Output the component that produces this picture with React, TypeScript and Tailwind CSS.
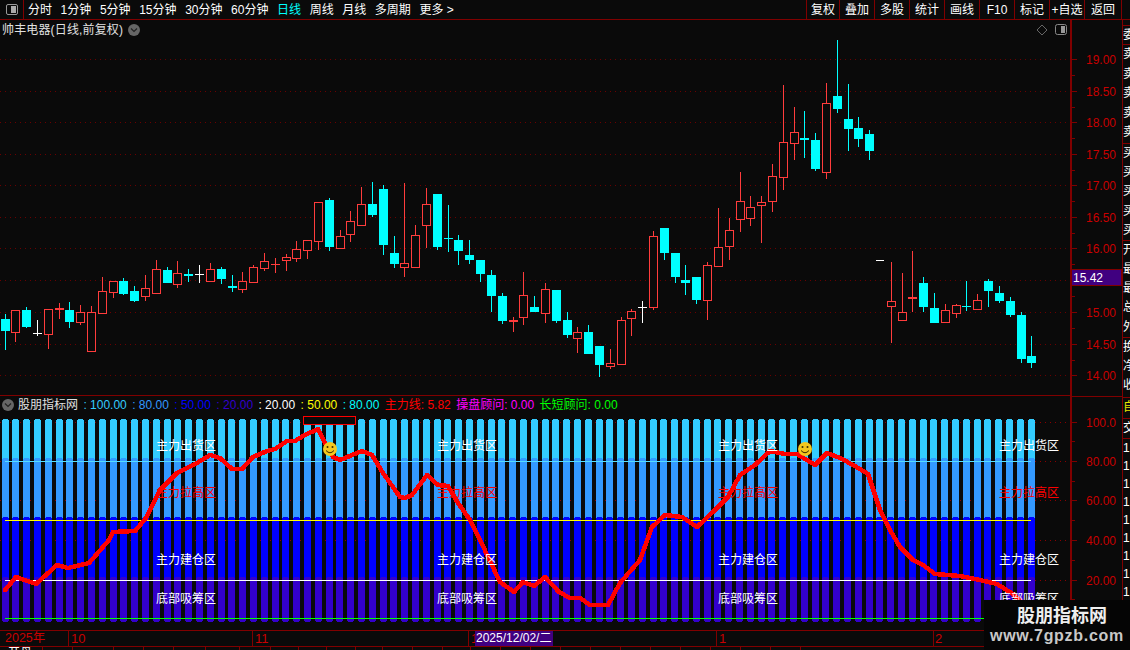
import React from 'react'

type Candle = [number, number, number, number, number, string]

// c = cyan body, r = hollow red, R = solid red, w = white cross
// values are [x, high, top, bottom, low, kind], read off 3x crops
const seg1: Candle[] = [
  [16, 432, 447, 483, 540, 'c'], [46, 421, 421, 485, 516, 'r'], [79, 411, 420, 471, 474, 'c'],
  [112, 450, 490, 492, 498, 'w'], [145, 418, 418, 491, 537, 'r'], [178, 399, 414, 419, 447, 'R'],
  [208, 396, 420, 456, 474, 'c'], [241, 405, 427, 455, 465, 'r'], [274, 408, 427, 542, 542, 'r'],
  [307, 321, 364, 428, 428, 'r'], [340, 334, 334, 365, 384, 'r'], [370, 324, 333, 372, 375, 'c'],
  [403, 348, 363, 393, 396, 'c'], [436, 315, 355, 377, 393, 'r'], [469, 270, 298, 368, 368, 'r'],
  [502, 291, 300, 339, 339, 'c'], [532, 273, 310, 341, 354, 'r'], [565, 297, 312, 318, 336, 'c'],
  [598, 285, 312, 314, 339, 'w'], [631, 279, 298, 332, 332, 'r'], [664, 291, 297, 327, 342, 'c'],
  [697, 315, 348, 354, 366, 'c'], [727, 306, 334, 356, 369, 'r'], [760, 285, 292, 335, 335, 'r'],
  [793, 249, 274, 293, 303, 'r'], [826, 264, 282, 285, 309, 'R'], [859, 252, 262, 269, 303, 'r'],
  [889, 213, 238, 263, 276, 'r'], [922, 211, 211, 239, 267, 'r'], [955, 97, 97, 212, 240, 'r'],
  [988, 84, 90, 231, 243, 'c'], [1021, 180, 199, 233, 233, 'r'], [1051, 123, 154, 191, 216, 'r'],
  [1084, 51, 103, 164, 164, 'r'], [1117, 36, 102, 135, 141, 'c'],
]

const seg2: Candle[] = [
  [10, 45, 57, 225, 255, 'c'], [43, 198, 249, 282, 294, 'c'], [73, 39, 280, 290, 321, 'r'],
  [106, 165, 196, 290, 290, 'r'], [139, 54, 103, 164, 234, 'r'], [172, 72, 72, 231, 240, 'c'],
  [205, 105, 204, 207, 246, 'c'], [235, 195, 210, 243, 285, 'c'], [268, 210, 255, 270, 282, 'c'],
  [301, 270, 270, 312, 336, 'c'], [334, 300, 315, 378, 426, 'c'], [367, 369, 378, 453, 462, 'c'],
  [400, 441, 450, 456, 486, 'R'], [430, 306, 376, 440, 465, 'r'], [463, 378, 411, 426, 426, 'c'],
  [496, 339, 358, 428, 459, 'r'], [529, 360, 360, 453, 459, 'c'], [562, 426, 450, 495, 504, 'c'],
  [592, 471, 487, 503, 549, 'r'], [625, 465, 486, 552, 552, 'c'], [658, 528, 528, 585, 621, 'c'],
  [691, 537, 580, 587, 597, 'r'], [724, 441, 451, 581, 581, 'r'], [754, 417, 424, 443, 498, 'r'],
  [787, 393, 411, 413, 459, 'w'], [820, 183, 199, 410, 420, 'r'], [853, 174, 174, 249, 270, 'c'],
  [886, 249, 249, 321, 339, 'c'], [916, 285, 330, 339, 375, 'c'], [949, 321, 321, 390, 402, 'c'],
  [982, 276, 286, 389, 450, 'r'], [1015, 114, 232, 287, 291, 'r'], [1048, 144, 181, 227, 270, 'r'],
]

const seg3: Candle[] = [
  [0, 426, 514, 568, 606, 'r'], [31, 498, 532, 565, 588, 'r'], [64, 498, 516, 526, 639, 'r'],
  [97, 402, 439, 512, 546, 'r'], [130, 165, 337, 440, 480, 'r'], [163, 231, 307, 338, 390, 'r'],
  [193, 243, 324, 330, 384, 'c'], [226, 309, 330, 417, 423, 'c'], [259, 159, 220, 425, 447, 'r'],
  [292, 30, 198, 237, 249, 'c'], [325, 162, 267, 297, 363, 'c'], [355, 261, 294, 327, 351, 'c'],
  [388, 300, 312, 363, 390, 'c'], [454, 696, 814, 827, 939, 'r'], [487, 729, 845, 869, 869, 'r'],
  [517, 663, 801, 807, 846, 'R'], [550, 741, 759, 831, 846, 'c'], [583, 789, 834, 879, 879, 'c'],
  [616, 822, 841, 875, 875, 'r'], [649, 822, 826, 848, 864, 'r'], [679, 753, 828, 832, 843, 'c'],
  [712, 792, 811, 838, 838, 'r'], [745, 747, 753, 783, 831, 'c'], [778, 768, 789, 813, 819, 'c'],
  [811, 801, 813, 855, 861, 'c'], [844, 846, 855, 987, 999, 'c'], [874, 918, 978, 999, 1014, 'c'],
]

const place = (list: Candle[], ox: number, oy: number): Candle[] =>
  list.map(([x, h, t, b, l, k]) => [Math.round(ox + x / 3), Math.round(oy + h / 3), Math.round(oy + t / 3), Math.round(oy + b / 3), Math.round(oy + l / 3), k] as Candle)

const candles = [...place(seg1, 0, 170), ...place(seg2, 380, 170), ...place(seg3, 740, 30)]

const priceLevels = [
  [59, '19.00'], [91, '18.50'], [122, '18.00'], [154, '17.50'], [185, '17.00'],
  [217, '16.50'], [248, '16.00'], [312, '15.00'], [344, '14.50'], [375, '14.00'],
] as const

const indicatorLevels = [
  [422, '100.0'], [461, '80.00'], [500, '60.00'], [540, '40.00'], [580, '20.00'],
] as const

const linePoints = [
  [5, 590], [16, 577], [36, 584], [57, 565], [68, 568], [89, 563], [96, 555], [109, 540], [113, 532],
  [135, 531], [146, 518], [150, 510], [160, 490], [177, 473], [197, 463], [210, 455], [220, 458],
  [232, 469], [242, 469], [253, 457], [267, 451], [275, 449], [287, 441], [295, 441], [303, 436],
  [318, 429], [325, 443], [333, 457], [340, 460], [362, 451], [372, 455], [383, 473], [400, 497],
  [405, 498], [412, 495], [427, 475], [438, 485], [448, 486], [458, 503], [470, 520], [480, 540],
  [500, 582], [514, 592], [523, 582], [534, 586], [545, 577], [559, 592], [570, 598], [580, 598],
  [590, 605], [608, 605], [620, 583], [640, 560], [652, 527], [665, 515], [682, 517], [697, 527],
  [715, 510], [728, 497], [740, 475], [755, 465], [770, 451], [785, 454], [797, 454], [815, 465],
  [827, 453], [840, 458], [855, 466], [868, 474], [880, 510], [890, 530], [900, 547], [913, 560],
  [923, 565], [935, 574], [960, 576], [980, 580], [997, 584], [1013, 594], [1032, 612],
]

const zoneColumns = [156, 437, 718, 999]
const barLefts = Array.from({ length: 96 }, (_, i) => Math.floor(5.3 + 10.8 * i - 3.3))

const Smiley = ({ cx, cy }: { cx: number; cy: number }) => (
  <g>
    <circle cx={cx} cy={cy} r={7} fill="#f4c81e" />
    <circle cx={cx - 2.5} cy={cy - 2} r={1} fill="#3a2a00" />
    <circle cx={cx + 2.5} cy={cy - 2} r={1} fill="#3a2a00" />
    <path d={`M${cx - 4} ${cy + 1.5} Q${cx} ${cy + 6} ${cx + 4} ${cy + 1.5}`} fill="none" stroke="#3a2a00" strokeWidth={1} />
  </g>
)

const PriceChart = () => (
  <svg className="absolute left-0 top-0" width={1070} height={376} viewBox="0 20 1070 376">
    {priceLevels.map(([y]) => (
      <line key={y} x1={0} x2={1066} y1={y + 0.5} y2={y + 0.5} stroke="#6a0000" strokeDasharray="1 4" />
    ))}
    <line x1={0} x2={1066} y1={280.5} y2={280.5} stroke="#6a0000" strokeDasharray="1 4" />
    <g shapeRendering="crispEdges">
      {candles.map(([x, h, t, b, l, k], i) => {
        const color = k === 'c' ? '#00ffff' : k === 'w' ? '#ffffff' : '#ff3c3c'
        return (
          <g key={i}>
            <rect x={x} y={h} width={1} height={l - h} fill={color} />
            {k === 'r' ? (
              <rect x={x - 3.5} y={t + 0.5} width={8} height={Math.max(b - t, 2)} fill="#0a0a0a" stroke={color} />
            ) : k === 'w' ? (
              <rect x={x - 4} y={t} width={9} height={1} fill={color} />
            ) : (
              <rect x={x - 4} y={t} width={9} height={Math.max(b - t, 1)} fill={color} />
            )}
          </g>
        )
      })}
      <rect x={876} y={260} width={8} height={1} fill="#ffffff" />
    </g>
    {/* top right pin + layout icons */}
    <path d="M1042 25 L1047 30 L1042 35 L1037 30 Z" fill="none" stroke="#666666" />
    <rect x={1055.5} y={24.5} width={11} height={10} rx={2} fill="none" stroke="#888888" />
    <rect x={1061} y={26} width={4} height={7} fill="#999999" />
  </svg>
)

const IndicatorChart = () => (
  <svg className="absolute left-0 top-0" width={1070} height={234} viewBox="0 396 1070 234">
    {indicatorLevels.map(([y]) => (
      <line key={y} x1={0} x2={1066} y1={y + 0.5} y2={y + 0.5} stroke="#8a0000" strokeDasharray="1 4" />
    ))}
    <g shapeRendering="crispEdges">
      {barLefts.map(x => (
        <g key={x}>
          <rect x={x} y={419} width={7} height={44} rx={3} fill="#33ccff" />
          <rect x={x} y={458} width={7} height={64} rx={3} fill="#3399ff" />
          <rect x={x} y={517} width={7} height={64} rx={3} fill="#0000ff" />
          <rect x={x} y={577} width={7} height={45} rx={3} fill="#3300cc" />
        </g>
      ))}
      <rect x={5} y={461} width={1026} height={1} fill="#55dcff" />
      <rect x={5} y={520} width={1026} height={1} fill="#ffff00" />
      <rect x={5} y={580} width={1026} height={1} fill="#ffffff" />
      <rect x={5} y={618} width={1026} height={1} fill="#00ff00" />
      <rect x={303} y={416} width={53} height={9} fill="#ff0000" />
      <rect x={304} y={417} width={51} height={7} fill="#0a0a0a" />
      <polyline
        points={linePoints.map(p => p.join(',')).join(' ')}
        fill="none"
        stroke="#ff0000"
        strokeWidth={4.5}
        strokeLinejoin="round"
        strokeLinecap="round"
      />
    </g>
    <Smiley cx={330} cy={449} />
    <Smiley cx={805} cy={449} />
    {zoneColumns.map(x => (
      <g key={x} fontSize={12}>
        <text x={x} y={449.5} fill="#ffffff">主力出货区</text>
        <text x={x} y={496.5} fill="#ff0000">主力拉高区</text>
        <text x={x} y={563.5} fill="#ffffff">主力建仓区</text>
        <text x={x} y={602.5} fill="#ffffff">底部吸筹区</text>
      </g>
    ))}
  </svg>
)

const AxisColumn = () => (
  <svg className="block" width={52} height={610} viewBox="1070 20 52 610">
    <g shapeRendering="crispEdges" fill="#800000">
      <rect x={1070} y={20} width={2} height={610} />
      {priceLevels.map(([y]) => <rect key={y} x={1071} y={y} width={6} height={1} />)}
      {[75, 107, 138, 170, 201, 233, 264, 296, 328, 360].map(y => <rect key={y} x={1071} y={y} width={4} height={1} />)}
      {indicatorLevels.map(([y]) => <rect key={y} x={1071} y={y} width={6} height={1} />)}
      {[441, 481, 520, 560, 599].map(y => <rect key={y} x={1071} y={y} width={4} height={1} />)}
      <rect x={1070} y={396} width={52} height={1} />
    </g>
    <g fontSize={12} fill="#c80000">
      {priceLevels.map(([y, t]) => <text key={y} x={1086} y={y + 5}>{t}</text>)}
      {indicatorLevels.map(([y, t]) => <text key={y} x={1086} y={y + 5}>{t}</text>)}
    </g>
    <rect x={1071.5} y={269.5} width={50} height={16} fill="#400080" stroke="#800000" shapeRendering="crispEdges" />
    <text x={1073} y={282} fontSize={12} fill="#ffffff">15.42</text>
  </svg>
)

const leftTabs = ['分时', '1分钟', '5分钟', '15分钟', '30分钟', '60分钟', '日线', '周线', '月线', '多周期', '更多 >']
const rightButtons: [string, string][] = [
  ['复权', 'w-[33px]'], ['叠加', 'w-[35px]'], ['多股', 'w-[35px]'], ['统计', 'w-[35px]'], ['画线', 'w-[35px]'],
  ['F10', 'w-[35px]'], ['标记', 'w-[35px]'], ['+自选', 'w-[35px]'], ['返回', 'w-[38px]'],
]

const legend: [string, string][] = [
  [': 100.00', 'text-[#33ccff]'], [': 80.00', 'text-[#3399ff]'], [': 50.00', 'text-[#0000ff]'], [': 20.00', 'text-[#3300cc]'],
  [': 20.00', 'text-white'], [': 50.00', 'text-[#ffff00]'], [': 80.00', 'text-[#00ffff]'],
]

const sellBuy = ['卖', '卖', '卖', '卖', '卖', '买', '买', '买', '买', '买']

const SideStrip = () => (
  <div className="w-[8px] shrink-0 overflow-hidden border-l border-[#800000] text-[12px] leading-[19px] text-white">
    <div className="h-[5px]" />
    <div className="h-[20px] border-y border-[#800000]">委</div>
    {sellBuy.slice(0, 5).map((t, i) => <div key={i} className="h-[19.6px]">{t}</div>)}
    <div className="border-t border-[#800000]">
      {sellBuy.slice(5).map((t, i) => <div key={i} className="h-[19.2px]">{t}</div>)}
    </div>
    <div className="border-t border-[#800000]">
      {['开', '最', '最', '总', '外'].map((t, i) => <div key={i} className="h-[19.2px]">{t}</div>)}
    </div>
    <div className="h-[60px] border-t border-[#800000]">
      {['换', '净', '收'].map((t, i) => <div key={i} className="h-[19.2px]">{t}</div>)}
    </div>
    <div className="h-[22px] border-y border-[#800000] text-[#e6e600]">自</div>
    <div className="h-[20px] border-b border-[#800000]">交</div>
    {Array.from({ length: 10 }, (_, i) => <div key={i} className="h-[18px]">1</div>)}
  </div>
)

const DateRow = () => (
  <div className="relative flex h-[17px] w-[1122px] border-y border-[#800000] text-[13px] leading-[15px] text-[#c80000]">
    <div className="w-[68px] pl-[5px] text-[12.5px]">2025年</div>
    <div className="w-[184px] border-l border-[#800000] pl-[2px]">10</div>
    <div className="w-[216px] border-l border-[#800000] pl-[2px]">11</div>
    <div className="flex w-[248px] border-l border-[#800000] pl-[2px]">
      <span className="w-[4px] overflow-hidden">1</span>
      <div className="h-[15px] w-[78px] whitespace-nowrap bg-[#400080] pl-[1px] text-[12px] text-white">2025/12/02/二</div>
    </div>
    <div className="w-[217px] border-l border-[#800000] pl-[2px]">1</div>
    <div className="w-[189px] border-l border-[#800000] pl-[1px]">2</div>
  </div>
)

const bottomCells = [43, 30, 41, 30, 30, 32, 34, 31, 28, 28, 29, 27, 30, 30, 28, 30, 30, 30, 30, 30, 30, 30, 30, 30, 30, 30]

export default function App() {
  return (
    <div className="relative h-[650px] w-[1130px] overflow-hidden bg-[#0a0a0a] font-['Liberation_Sans','Noto_Sans_CJK_SC',sans-serif] text-[12px] text-white">
      {/* top toolbar */}
      <div className="flex h-[20px] items-center border-b border-[#800000]">
        <div className="flex h-full w-[24px] items-center justify-center border-r border-[#800000]">
          <div className="flex h-[11px] w-[12px] justify-end rounded-[2px] border border-[#999999] p-[1px]">
            <div className="w-[5px] bg-[#aaaaaa]" />
          </div>
        </div>
        <div className="ml-[4px] flex gap-[8.6px] whitespace-nowrap">
          {leftTabs.map(t => (
            <span key={t} className={t === '日线' ? 'text-[#00ffff]' : ''}>{t}</span>
          ))}
        </div>
        <div className="flex-1" />
        <div className="mr-[8px] flex h-full">
          {rightButtons.map(([t, w]) => (
            <div key={t} className={`${w} flex items-center justify-center whitespace-nowrap border-l border-[#800000] last:border-r`}>{t}</div>
          ))}
        </div>
      </div>

      <div className="flex h-[610px]">
        <div className="w-[1070px] shrink-0">
          {/* price panel */}
          <div className="relative h-[376px] border-b border-[#800000]">
            <PriceChart />
            <div className="relative flex items-center gap-[5px] pl-[2px] pt-[2px] leading-[16px] text-[#e0e0e0]">
              <span className="tracking-[0.15px]">帅丰电器(日线,前复权)</span>
              <span className="flex h-[12px] w-[12px] items-center justify-center rounded-full bg-[#666666] text-[#222222]">
                <svg width="8" height="8" viewBox="0 0 8 8"><path d="M1 2.5 L4 5.5 L7 2.5" fill="none" stroke="#222222" strokeWidth="1.2" /></svg>
              </span>
            </div>
          </div>
          {/* indicator panel */}
          <div className="relative h-[234px]">
            <IndicatorChart />
            <div className="relative flex h-[18px] items-center gap-[5.4px] whitespace-nowrap pl-[2px] text-[12px]">
              <span className="flex h-[12px] w-[12px] items-center justify-center rounded-full bg-[#666666]">
                <svg width="8" height="8" viewBox="0 0 8 8"><path d="M1 2.5 L4 5.5 L7 2.5" fill="none" stroke="#222222" strokeWidth="1.2" /></svg>
              </span>
              <span className="-ml-[1.4px] text-[#e0e0e0]">股朋指标网</span>
              {legend.map(([t, c], i) => (
                <span key={i} className={c}>{t}</span>
              ))}
              <span className="text-[#ff0000]">主力线: 5.82</span>
              <span className="text-[#ff00ff]">操盘顾问: 0.00</span>
              <span className="text-[#00ff00]">长短顾问: 0.00</span>
            </div>
          </div>
        </div>
        <div className="w-[52px] shrink-0">
          <AxisColumn />
        </div>
        <SideStrip />
      </div>

      <DateRow />

      <div className="flex h-[3px] w-[1122px] overflow-hidden text-[12px] leading-[12px] text-white">
        {bottomCells.map((w, i) => (
          <div key={i} style={{ width: w }} className="shrink-0 border-r border-[#800000] pl-[8px]">{i === 0 ? '开盘' : ''}</div>
        ))}
      </div>

      {/* site watermark */}
      <div className="absolute bottom-0 right-0 flex h-[50px] w-[146px] flex-col items-center bg-[#050505] pt-[5px]">
        <span className="ml-[10px] text-[18px] font-bold leading-[22px] text-[#eeeeee]">股朋指标网</span>
        <span className="text-[16px] font-bold leading-[18px] tracking-[0.7px] text-[#c8c8c8]">www.7gpzb.com</span>
      </div>
    </div>
  )
}
